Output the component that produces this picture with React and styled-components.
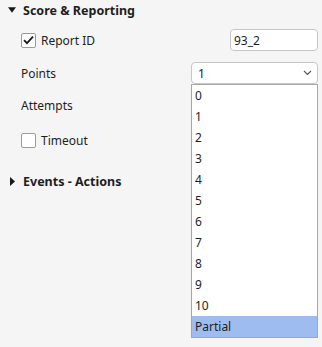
import styled, { createGlobalStyle } from "styled-components"

const Global = createGlobalStyle`
body{
margin:0;
background:#f5f5f5;
font-family:"Segoe UI","Noto Sans","Open Sans",sans-serif;
font-size:12px;
color:#1e1e1e;
}
`
const Panel = styled.div`
width:322px;
height:347px;
display:flex;
flex-direction:column;
box-sizing:border-box;
padding:0 4px 0 8px;
`
const Header = styled.div`
display:flex;
align-items:center;
height:20px;
margin-top:${p => p.gap || 0}px;
font-weight:700;
font-size:12.5px;
gap:7px;
`
const Arrow = styled.span`
width:8px;
display:flex;
justify-content:center;
`
const Row = styled.div`
position:relative;
display:flex;
align-items:center;
justify-content:space-between;
height:22px;
margin-top:${p => p.gap}px;
padding-left:13px;
`
const Label = styled.label`
display:flex;
align-items:center;
gap:5px;
`
const Box = styled.span`
width:13px;
height:13px;
border:1px solid #9a9a9a;
border-radius:2px;
background:#fff;
display:flex;
align-items:center;
justify-content:center;
`
const TextInput = styled.div`
width:88px;
height:22px;
box-sizing:border-box;
border:1px solid #c6c6c6;
border-radius:4px;
background:#fff;
padding-left:3px;
display:flex;
align-items:center;
`
const SelectWrap = styled.div`
position:relative;
width:127px;
`
const Select = styled.div`
height:22px;
box-sizing:border-box;
border:1px solid #c6c6c6;
border-radius:4px;
background:#fff;
padding:0 5px 0 6px;
display:flex;
align-items:center;
justify-content:space-between;
`
const List = styled.div`
position:absolute;
top:22px;
left:0;
width:127px;
box-sizing:border-box;
border:1px solid #a7a7a7;
background:#fff;
z-index:2;
`
const Item = styled.div`
height:21px;
display:flex;
align-items:center;
padding-left:3px;
background:${p => p.active ? "#9fbcf1" : "transparent"};
`

const Check = () => (
  <svg width="11" height="10" viewBox="0 0 11 10">
    <path d="M1 5.2 L4 8.2 L10 1.6" fill="none" stroke="#1a1a1a" strokeWidth="1.8" />
  </svg>
)

const Down = () => (
  <svg width="9" height="6" viewBox="0 0 9 6"><path d="M0 0 H9 L4.5 6 Z" fill="#1a1a1a" /></svg>
)
const Right = () => (
  <svg width="5" height="9" viewBox="0 0 5 9"><path d="M0 0 L5 4.5 L0 9 Z" fill="#1a1a1a" /></svg>
)
const Chevron = () => (
  <svg width="9" height="6" viewBox="0 0 9 6">
    <path d="M1 1 L4.5 4.5 L8 1" fill="none" stroke="#555" strokeWidth="1.1" />
  </svg>
)

const options = ["0", "1", "2", "3", "4", "5", "6", "7", "8", "9", "10", "Partial"]

const App = () => {
  return (
    <Panel>
      <Global />
      <Header>
        <Arrow><Down /></Arrow>
        Score &amp; Reporting
      </Header>
      <Row gap={9}>
        <Label><Box><Check /></Box>Report ID</Label>
        <TextInput>93_2</TextInput>
      </Row>
      <Row gap={11}>
        <Label>Points</Label>
        <SelectWrap>
          <Select>1<Chevron /></Select>
          <List>
            {options.map(o => <Item key={o} active={o === "Partial"}>{o}</Item>)}
          </List>
        </SelectWrap>
      </Row>
      <Row gap={10}>
        <Label>Attempts</Label>
      </Row>
      <Row gap={13}>
        <Label><Box />Timeout</Label>
      </Row>
      <Header gap={20}>
        <Arrow><Right /></Arrow>
        Events - Actions
      </Header>
    </Panel>
  )
}
export default App
